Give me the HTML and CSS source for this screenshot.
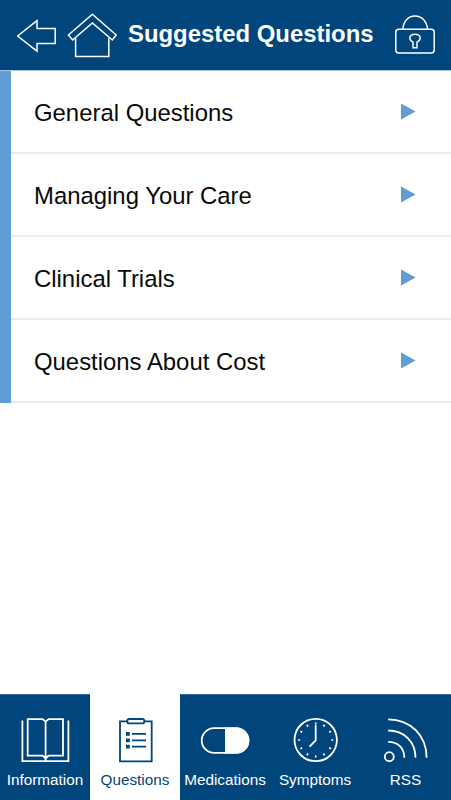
FILE: index.html
```html
<!DOCTYPE html>
<html lang="en">
<head>
<meta charset="utf-8">
<title>Suggested Questions</title>
<link rel="stylesheet" href="styles.css">
</head>
<body>
<header class="header">
  <svg class="icon back" width="40" height="34" viewBox="17 19 40 34"><path d="M17.6 36L37 20.6V28.4H55.2V43.4H37V51.2Z"/></svg>
  <svg class="icon home" width="50" height="46" viewBox="67 12 50 46"><path d="M92.4 14.2L116.2 35L112.3 40L92.4 23L72.6 40L68.4 35Z M75.6 38V56.4H108.8V38"/></svg>
  <h1 class="title">Suggested Questions</h1>
  <svg class="icon lock" width="42" height="42" viewBox="394 14 42 42"><rect x="395.8" y="29.3" width="38.4" height="23.6" rx="3"/><path d="M402.8 29.3C403.5 21 408.5 16 415 16S426.8 21 427.6 29.3"/><path d="M413 42.2C408 39.5 409.2 34.2 415 34.2S422 39.5 417 42.2V47.8H413Z"/></svg>
</header>
<main class="content">
  <ul class="list">
    <li class="row"><span>General Questions</span><svg class="arrow" width="15" height="17" viewBox="0 0 15 17"><path d="M0 .5L14.5 8.5L0 16.5Z"/></svg></li>
    <li class="row"><span>Managing Your Care</span><svg class="arrow" width="15" height="17" viewBox="0 0 15 17"><path d="M0 .5L14.5 8.5L0 16.5Z"/></svg></li>
    <li class="row"><span>Clinical Trials</span><svg class="arrow" width="15" height="17" viewBox="0 0 15 17"><path d="M0 .5L14.5 8.5L0 16.5Z"/></svg></li>
    <li class="row"><span>Questions About Cost</span><svg class="arrow" width="15" height="17" viewBox="0 0 15 17"><path d="M0 .5L14.5 8.5L0 16.5Z"/></svg></li>
  </ul>
</main>
<nav class="tabs">
  <div class="tab">
    <svg class="icon" width="90" height="50" viewBox="0 715 90 50"><path d="M22.4 720.5V761.2H68.4V720.5M27.7 719.1H42.5L45.6 721.5L48.7 719.1H63V755.7H48.7L45.6 758L42.5 755.7H27.7ZM45.6 721V761"/><path class="solid" d="M43.5 757H47.7L45.6 760.5Z"/></svg>
    <span>Information</span>
  </div>
  <div class="tab active">
    <svg class="icon" width="90" height="50" viewBox="90 715 90 50"><path d="M127.5 721.3H120V761.3H151.7V721.3H144.2"/><rect x="127.3" y="719" width="17" height="4.4" rx="2"/><path d="M132 733.8H146M132 740.3H146M132 746.7H146"/><path class="solid" d="M126 732h3.8v3.8H126ZM126 738.4h3.8v3.8H126ZM126 744.8h3.8v3.8H126Z"/></svg>
    <span>Questions</span>
  </div>
  <div class="tab">
    <svg class="icon" width="90" height="50" viewBox="180 715 90 50"><rect x="201.7" y="728.2" width="46.8" height="24.6" rx="12.3"/><path class="solid" d="M225 727.5H236.3A13 13 0 0 1 236.3 753.5H225Z"/></svg>
    <span>Medications</span>
  </div>
  <div class="tab">
    <svg class="icon" width="90" height="50" viewBox="270 715 90 50"><circle cx="315.7" cy="740" r="21.2"/><path d="M315.7 725V740.5L309.5 746.7"/><circle class="ticks" cx="315.7" cy="740" r="16.6" pathLength="120"/></svg>
    <span>Symptoms</span>
  </div>
  <div class="tab rss">
    <svg class="icon" width="91" height="50" viewBox="360 715 91 50"><circle cx="389.3" cy="756.7" r="4.5"/><path d="M388.2 719.3C410.5 719.3 426.6 735.5 426.6 757.7M388.2 730.5C404 730.5 415.5 741.8 415.5 757.7M388.2 741.8C398 741.8 404.3 748.2 404.3 757.7"/></svg>
    <span>RSS</span>
  </div>
</nav>
</body>
</html>
```
FILE: styles.css
```css
* { box-sizing: border-box; }
body {
  margin: 0;
  height: 800px;
  display: flex;
  flex-direction: column;
  background: #fff;
  font-family: "Liberation Sans", Arial, sans-serif;
  overflow: hidden;
}
.header {
  flex: none;
  height: 70px;
  display: flex;
  align-items: flex-start;
  padding-left: 17px;
  background: #00457c;
  color: #fff;
}
.icon {
  flex: none;
  display: block;
  fill: none;
  stroke: currentColor;
  stroke-width: 1.5;
}
.back { margin-top: 19px; }
.home { margin: 12px 0 0 10px; }
.lock { margin: 14px 0 0 19px; }
.title {
  width: 247px;
  margin: 20px 0 0 11px;
  font-size: 23.9px;
  line-height: 28px;
  white-space: nowrap;
}
.content { flex: 1; }
.list {
  margin: 0;
  padding: 0 0 0 11px;
  list-style: none;
  border-top: 1px solid #a9c3da;
  background: linear-gradient(to right, #5f9dd4 11px, #fff 11px);
}
.row {
  height: 83px;
  display: flex;
  align-items: center;
  justify-content: space-between;
  padding: 3px 35px 0 23px;
  border-bottom: 2px solid #ebebeb;
  color: #0a0a0a;
  font-size: 23.9px;
}
.arrow {
  fill: #5f9dd4;
  margin-top: -4px;
}
.tabs {
  flex: none;
  height: 106px;
  display: grid;
  grid-template-columns: repeat(4, 90px) 91px;
  background: #00457c;
  border-top: 1px solid #33699a;
}
.tab {
  padding-top: 20px;
  color: #fff;
  font-size: 15.3px;
  line-height: 18px;
  text-align: center;
}
.tab .icon { margin-bottom: 6px; stroke-width: 1.8; }
.tab.active {
  margin-top: -1px;
  padding-top: 21px;
  background: #fff;
  color: #00457c;
}
.icon .solid { fill: currentColor; stroke: none; }
.icon .ticks { stroke-width: 2; stroke-dasharray: 2 8; stroke-dashoffset: 1; }
```
